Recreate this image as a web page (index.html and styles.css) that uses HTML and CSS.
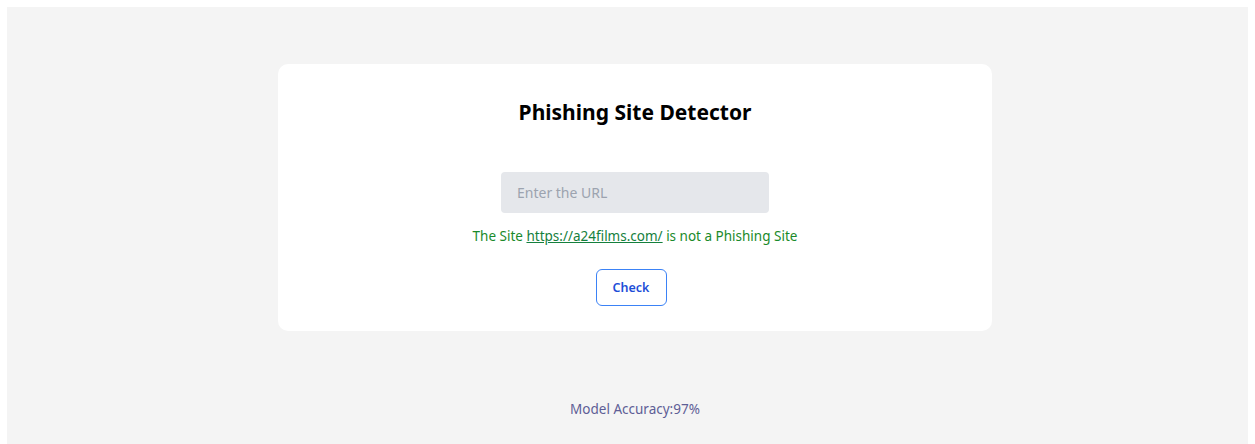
FILE: index.html
```html
<!DOCTYPE html>
<html lang="en">
<head>
<meta charset="utf-8">
<title>Phishing Site Detector</title>
<link rel="stylesheet" href="styles.css">
</head>
<body>
  <div class="page">
    <main class="card">
      <h1 class="title">Phishing Site Detector</h1>
      <form class="form">
        <input class="url-input" type="text" placeholder="Enter the URL">
        <p class="result">The Site <a class="result-link" href="#">https://a24films.com/</a> is not a Phishing Site</p>
        <button class="check-btn" type="button">Check</button>
      </form>
    </main>
    <p class="accuracy">Model Accuracy:97%</p>
  </div>
</body>
</html>
```

FILE: styles.css
```css
body {
  margin: 7px;
  font-family: "Noto Sans", "Open Sans", sans-serif;
}

.page {
  width: 1256px;
  min-height: 100vh;
  background: #f4f4f4;
  display: flex;
  flex-direction: column;
  align-items: center;
  padding-top: 57px;
  box-sizing: border-box;
}

.card {
  width: 714px;
  background: #ffffff;
  border-radius: 10px;
  display: flex;
  flex-direction: column;
  align-items: center;
  padding: 30px 0 25px;
  box-sizing: border-box;
}

.title {
  margin: 0;
  font-size: 21px;
  line-height: 36px;
  font-weight: 700;
  color: #000;
}

.form {
  display: flex;
  flex-direction: column;
  align-items: center;
  margin-top: 42px;
}

.url-input {
  width: 268px;
  height: 41px;
  box-sizing: border-box;
  border: none;
  border-radius: 4px;
  background: #e5e7eb;
  padding: 0 16px;
  font-family: inherit;
  font-size: 14px;
  color: #111;
  outline: none;
}

.url-input::placeholder {
  color: #9ca3af;
}

.result {
  margin: 12px 0 0;
  font-size: 13.5px;
  line-height: 22px;
  color: #1a8a2a;
}

.result-link {
  color: #15803d;
  text-decoration: underline;
}

.check-btn {
  margin: 22px 8px 0 0;
  width: 71px;
  height: 37px;
  box-sizing: border-box;
  background: #fff;
  border: 1px solid #3b82f6;
  border-radius: 6px;
  font-family: inherit;
  font-size: 12.5px;
  font-weight: 600;
  color: #1d4ed8;
  cursor: pointer;
}

.accuracy {
  margin: 68px 0 0;
  font-size: 13.5px;
  line-height: 20px;
  color: #5e5e96;
}
```
